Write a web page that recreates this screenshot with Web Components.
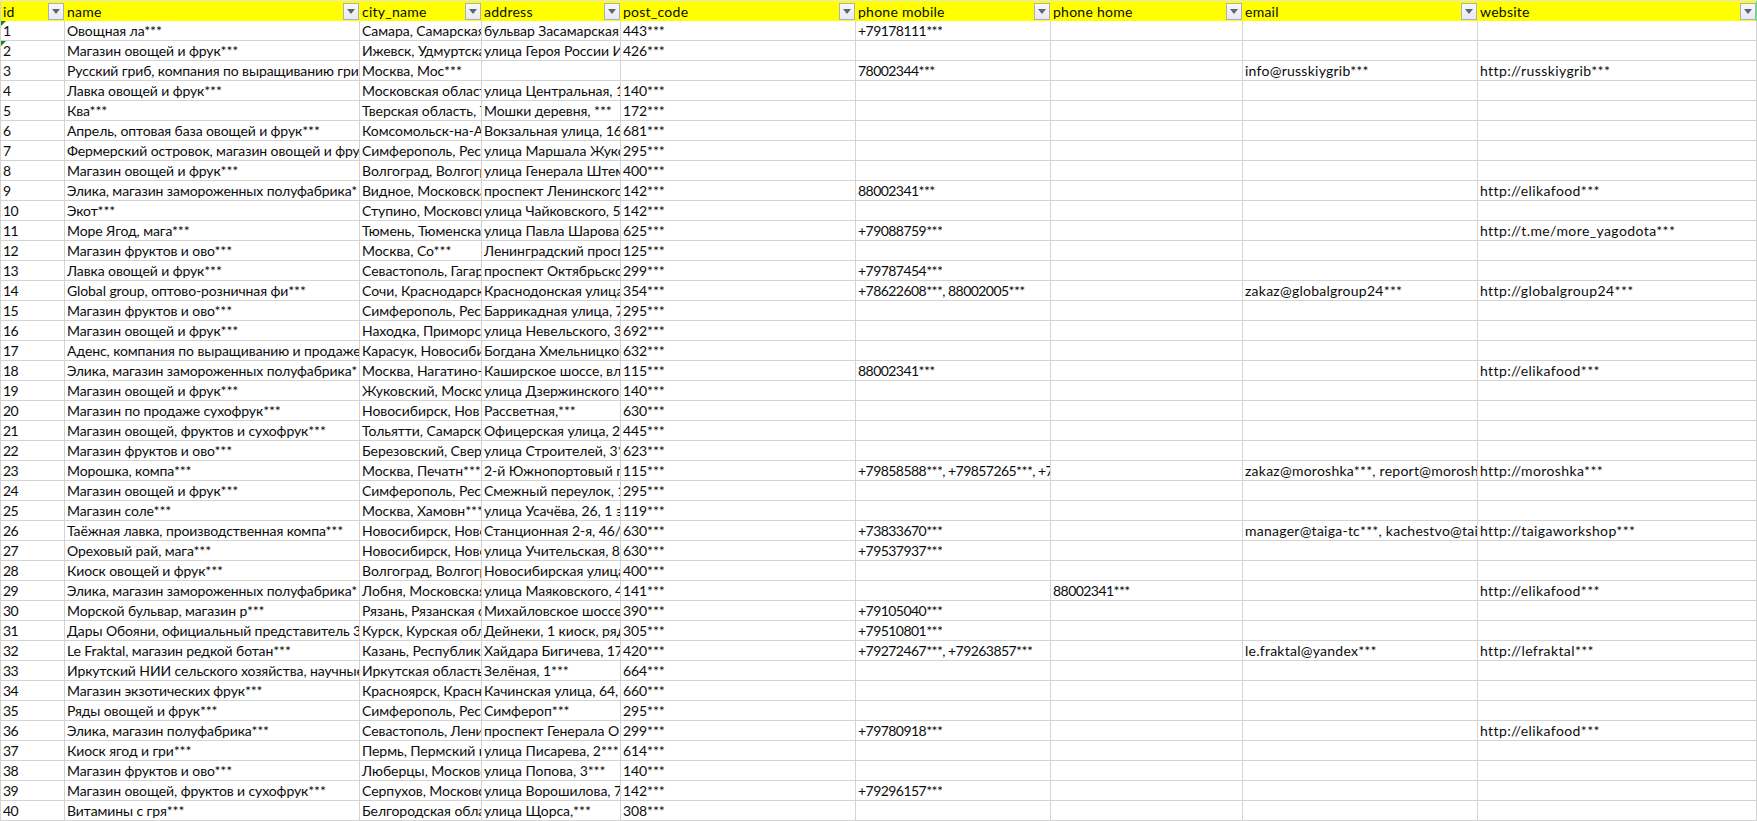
<!DOCTYPE html>
<html lang="ru">
<head>
<meta charset="utf-8">
<title>Sheet</title>
<style>
  html, body { margin: 0; background: #fff; }
  body { overflow: hidden; }
</style>
</head>
<body>
<excel-sheet></excel-sheet>
<script>
const HEADERS = ['id', 'name', 'city_name', 'address', 'post_code', 'phone mobile', 'phone home', 'email', 'website'];
// lato is wider on digits and narrower on latin than the sheet's font, so each column gets its own tracking
const COL_KINDS = ['digits', 'name', 'text', 'text', 'code', 'digits', 'digits', 'mail', 'url'];

const ROWS = [
  ['1', 'Овощная ла***', 'Самара, Самарская', 'бульвар Засамарская', '443***', '+79178111***'],
  ['2', 'Магазин овощей и фрук***', 'Ижевск, Удмуртска', 'улица Героя России И', '426***'],
  ['3', 'Русский гриб, компания по выращиванию гриб', 'Москва, Мос***', '', '', '78002344***', '', 'info@russkiygrib***', 'http://russkiygrib***'],
  ['4', 'Лавка овощей и фрук***', 'Московская област', 'улица Центральная, 1', '140***'],
  ['5', 'Ква***', 'Тверская область, Т', 'Мошки деревня, ***', '172***'],
  ['6', 'Апрель, оптовая база овощей и фрук***', 'Комсомольск-на-А', 'Вокзальная улица, 16,', '681***'],
  ['7', 'Фермерский островок, магазин овощей и фру', 'Симферополь, Рес', 'улица Маршала Жукс', '295***'],
  ['8', 'Магазин овощей и фрук***', 'Волгоград, Волгогр', 'улица Генерала Штем', '400***'],
  ['9', 'Элика, магазин замороженных полуфабрика*', 'Видное, Московска', 'проспект Ленинского', '142***', '88002341***', '', '', 'http://elikafood***'],
  ['10', 'Экот***', 'Ступино, Московск', 'улица Чайковского, 5а', '142***'],
  ['11', 'Море Ягод, мага***', 'Тюмень, Тюменска', 'улица Павла Шарова,', '625***', '+79088759***', '', '', 'http://t.me/more_yagodota***'],
  ['12', 'Магазин фруктов и ово***', 'Москва, Со***', 'Ленинградский просп', '125***'],
  ['13', 'Лавка овощей и фрук***', 'Севастополь, Гагар', 'проспект Октябрьско', '299***', '+79787454***'],
  ['14', 'Global group, оптово-розничная фи***', 'Сочи, Краснодарск', 'Краснодонская улица', '354***', '+78622608***, 88002005***', '', 'zakaz@globalgroup24***', 'http://globalgroup24***'],
  ['15', 'Магазин фруктов и ово***', 'Симферополь, Рес', 'Баррикадная улица, 7', '295***'],
  ['16', 'Магазин овощей и фрук***', 'Находка, Приморск', 'улица Невельского, 3', '692***'],
  ['17', 'Аденс, компания по выращиванию и продаже', 'Карасук, Новосиби', 'Богдана Хмельницког', '632***'],
  ['18', 'Элика, магазин замороженных полуфабрика*', 'Москва, Нагатино-С', 'Каширское шоссе, вл', '115***', '88002341***', '', '', 'http://elikafood***'],
  ['19', 'Магазин овощей и фрук***', 'Жуковский, Москов', 'улица Дзержинского,', '140***'],
  ['20', 'Магазин по продаже сухофрук***', 'Новосибирск, Нов', 'Рассветная,***', '630***'],
  ['21', 'Магазин овощей, фруктов и сухофрук***', 'Тольятти, Самарска', 'Офицерская улица, 2', '445***'],
  ['22', 'Магазин фруктов и ово***', 'Березовский, Свер', 'улица Строителей, 3*', '623***'],
  ['23', 'Морошка, компа***', 'Москва, Печатн***', '2-й Южнопортовый п', '115***', '+79858588***, +79857265***, +7', '', 'zakaz@moroshka***, report@morosh', 'http://moroshka***'],
  ['24', 'Магазин овощей и фрук***', 'Симферополь, Рес', 'Смежный переулок, 1', '295***'],
  ['25', 'Магазин соле***', 'Москва, Хамовн***', 'улица Усачёва, 26, 1 э', '119***'],
  ['26', 'Таёжная лавка, производственная компа***', 'Новосибирск, Ново', 'Станционная 2-я, 46/2', '630***', '+73833670***', '', 'manager@taiga-tc***, kachestvo@tai', 'http://taigaworkshop***'],
  ['27', 'Ореховый рай, мага***', 'Новосибирск, Ново', 'улица Учительская, 8', '630***', '+79537937***'],
  ['28', 'Киоск овощей и фрук***', 'Волгоград, Волгогр', 'Новосибирская улица', '400***'],
  ['29', 'Элика, магазин замороженных полуфабрика*', 'Лобня, Московская', 'улица Маяковского, 4', '141***', '', '88002341***', '', 'http://elikafood***'],
  ['30', 'Морской бульвар, магазин р***', 'Рязань, Рязанская о', 'Михайловское шоссе', '390***', '+79105040***'],
  ['31', 'Дары Обояни, официальный представитель 3', 'Курск, Курская обл', 'Дейнеки, 1 киоск, ряд', '305***', '+79510801***'],
  ['32', 'Le Fraktal, магазин редкой ботан***', 'Казань, Республика', 'Хайдара Бигичева, 17,', '420***', '+79272467***, +79263857***', '', 'le.fraktal@yandex***', 'http://lefraktal***'],
  ['33', 'Иркутский НИИ сельского хозяйства, научные', 'Иркутская область,', 'Зелёная, 1***', '664***'],
  ['34', 'Магазин экзотических фрук***', 'Красноярск, Красно', 'Качинская улица, 64,', '660***'],
  ['35', 'Ряды овощей и фрук***', 'Симферополь, Рес', 'Симфероп***', '295***'],
  ['36', 'Элика, магазин полуфабрика***', 'Севастополь, Лени', 'проспект Генерала О', '299***', '+79780918***', '', '', 'http://elikafood***'],
  ['37', 'Киоск ягод и гри***', 'Пермь, Пермский к', 'улица Писарева, 2***', '614***'],
  ['38', 'Магазин фруктов и ово***', 'Люберцы, Московс', 'улица Попова, 3***', '140***'],
  ['39', 'Магазин овощей, фруктов и сухофрук***', 'Серпухов, Московс', 'улица Ворошилова, 7', '142***', '+79296157***'],
  ['40', 'Витамины с гря***', 'Белгородская обла', 'улица Щорса,***', '308***'],
];

class FilterButton extends HTMLElement {
  connectedCallback() {
    this.attachShadow({ mode: 'open' });
    this.shadowRoot.innerHTML = `
      <style>
        :host {
          display: flex;
          align-items: center;
          justify-content: center;
          flex: none;
          box-sizing: border-box;
          width: 16px;
          height: 17px;
          border: 1px solid #a9b0bf;
          background: linear-gradient(#f8f9fb, #e6e9f0);
        }
        svg { display: block; }
      </style>
      <svg xmlns="http://www.w3.org/2000/svg" width="8" height="5" viewBox="0 0 8 5">
        <path d="M0 0h8L4 5z" fill="#5f6470" />
      </svg>
    `;
  }
}
customElements.define('filter-button', FilterButton);

class HeadCell extends HTMLElement {
  connectedCallback() {
    this.attachShadow({ mode: 'open' });
    this.shadowRoot.innerHTML = `
      <style>
        :host {
          display: flex;
          align-items: center;
          justify-content: space-between;
          min-width: 0;
          padding: 0 1px 0 2px;
          background: #ffff00;
          letter-spacing: 0.25px;
        }
        :host(:last-child) {
          padding-right: 0;
          border-right: 1px solid #66dd88;
        }
        .label { white-space: nowrap; overflow: hidden; }
      </style>
      <span class="label"><slot></slot></span>
      <filter-button></filter-button>
    `;
  }
}
customElements.define('head-cell', HeadCell);

class SheetCell extends HTMLElement {
  connectedCallback() {
    this.attachShadow({ mode: 'open' });
    this.shadowRoot.innerHTML = `
      <style>
        :host {
          display: block;
          position: relative;
          min-width: 0;
          padding-left: 2px;
          border-right: 1px solid #d4d4d4;
          white-space: nowrap;
          overflow: hidden;
          line-height: 19px;
        }
        :host([kind=name]) { letter-spacing: -0.1px; }
        :host([kind=text]) { letter-spacing: -0.05px; }
        :host([kind=code]) { letter-spacing: -0.1px; }
        :host([kind=digits]) { letter-spacing: -0.55px; }
        :host([kind=mail]) { letter-spacing: 0.25px; }
        :host([kind=url]) { letter-spacing: 0.4px; }
        /* excel "number stored as text" marker */
        :host([flag])::before {
          content: '';
          position: absolute;
          top: 0;
          left: 0;
          border-top: 5px solid #14821e;
          border-right: 5px solid transparent;
        }
      </style>
      <slot></slot>
    `;
  }
}
customElements.define('sheet-cell', SheetCell);

class SheetRow extends HTMLElement {
  connectedCallback() {
    this.attachShadow({ mode: 'open' });
    this.shadowRoot.innerHTML = `
      <style>
        :host {
          display: grid;
          grid-template-columns: var(--sheet-cols);
          box-sizing: border-box;
          height: 20px;
          border-bottom: 1px solid #d4d4d4;
        }
        :host([head]) {
          height: 20px;
          border-bottom: 0;
        }
      </style>
      <slot></slot>
    `;
  }
}
customElements.define('sheet-row', SheetRow);

class ExcelSheet extends HTMLElement {
  connectedCallback() {
    this.attachShadow({ mode: 'open' });
    this.shadowRoot.innerHTML = `
      <style>
        :host {
          display: block;
          box-sizing: border-box;
          width: 1757px;
          height: 821px;
          overflow: hidden;
          border-top: 1px solid #e4e4e4;
          border-left: 1px solid #d4d4d4;
          font: 14px Lato, "Liberation Sans", sans-serif;
          color: #0c0c0c;
          --sheet-cols: 64px 295px 122px 139px 235px 195px 192px 235px 279px;
        }
      </style>
      <slot></slot>
    `;
    const head = document.createElement('sheet-row');
    head.setAttribute('head', '');
    for (const title of HEADERS) {
      const cell = document.createElement('head-cell');
      cell.textContent = title;
      head.append(cell);
    }
    this.append(head);
    for (const values of ROWS) {
      const row = document.createElement('sheet-row');
      for (let i = 0; i < HEADERS.length; i++) {
        const cell = document.createElement('sheet-cell');
        cell.textContent = values[i] || '';
        cell.setAttribute('kind', COL_KINDS[i]);
        if (i === 0 && +values[0] <= 2) cell.setAttribute('flag', '');
        row.append(cell);
      }
      this.append(row);
    }
  }
}
customElements.define('excel-sheet', ExcelSheet);
</script>
</body>
</html>
